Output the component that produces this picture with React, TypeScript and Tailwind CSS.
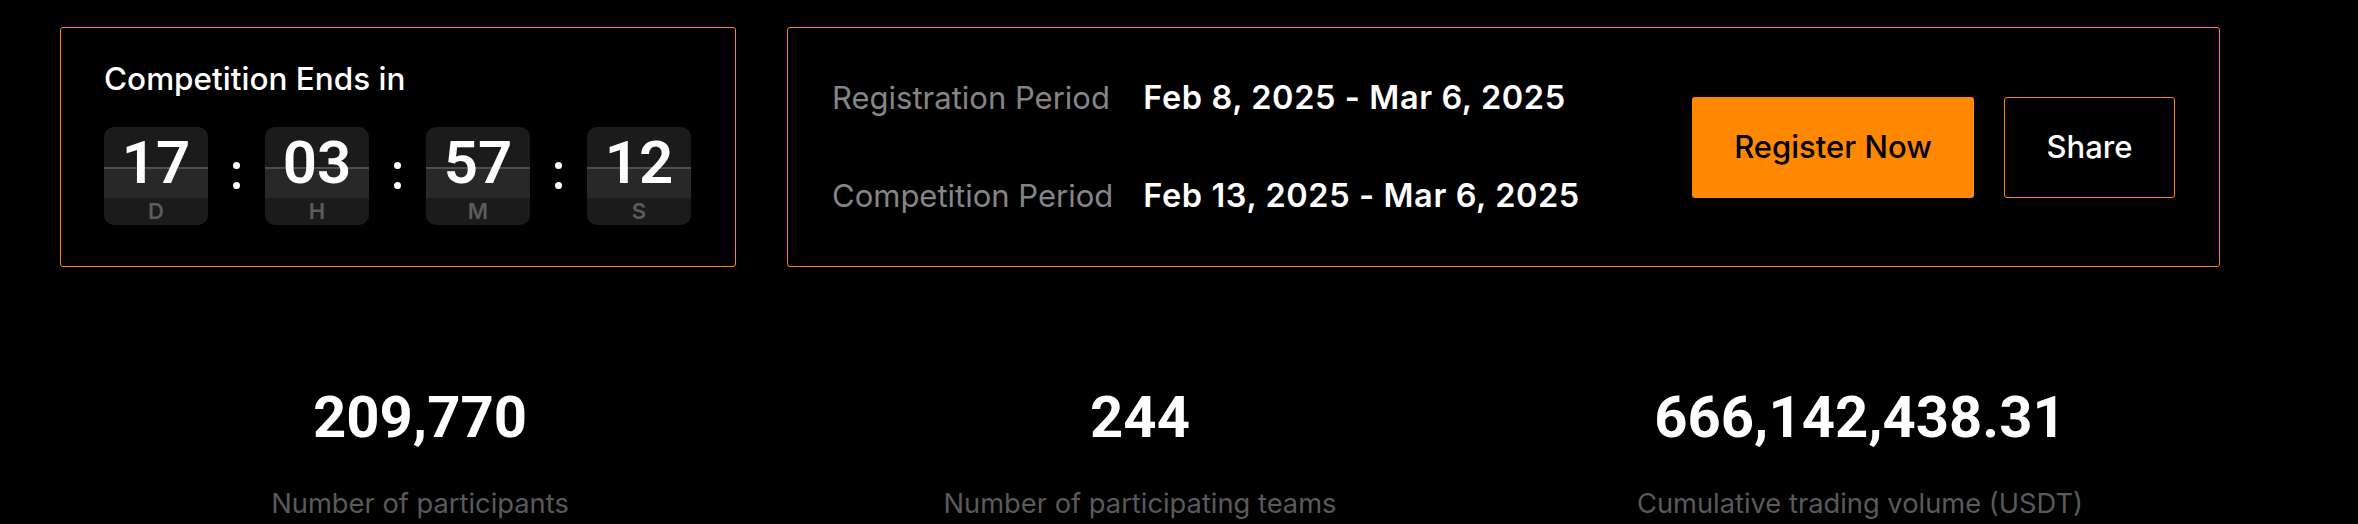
/* Trading competition header: countdown, periods, actions and stats */

const textFont = "font-['Inter','Noto_Sans',sans-serif]"
const numFont = "font-['Roboto','Liberation_Sans',sans-serif]"

const countdown = [
  { value: '17', unit: 'D' },
  { value: '03', unit: 'H' },
  { value: '57', unit: 'M' },
  { value: '12', unit: 'S' },
]

const periods = [
  { label: 'Registration Period', range: 'Feb 8, 2025 - Mar 6, 2025' },
  { label: 'Competition Period', range: 'Feb 13, 2025 - Mar 6, 2025' },
]

const stats = [
  { value: '209,770', label: 'Number of participants' },
  { value: '244', label: 'Number of participating teams' },
  { value: '666,142,438.31', label: 'Cumulative trading volume (USDT)' },
]

function FlipTile({ value, unit }: { value: string; unit: string }) {
  return (
    <div className="w-[104px] h-[98px] rounded-[10px] flex flex-col items-center bg-[linear-gradient(to_bottom,#1b1b1b_0,#1b1b1b_40px,#4f4f4f_40px,#4f4f4f_42px,#282828_42px,#282828_71px,#1b1b1b_71px)]">
      <span className={`${numFont} pt-[6px] text-[60px] leading-none font-semibold text-white`}>{value}</span>
      <span className={`${textFont} mt-[7px] text-[22px] leading-none font-semibold text-[#5c5c5c]`}>{unit}</span>
    </div>
  )
}

function Colon() {
  return (
    <div className="w-[57px] flex flex-col items-center gap-[13px]">
      <span className="w-[7px] h-[7px] rounded-full bg-white" />
      <span className="w-[7px] h-[7px] rounded-full bg-white" />
    </div>
  )
}

export default function App() {
  return (
    <div className={`min-h-screen bg-black ${textFont}`}>
      <div className="w-[2160px] ml-[60px] pt-[27px]">
        {/* 倒计时 + 时间段 */}
        <div className="flex gap-[51px]">
          <div className="w-[676px] h-[240px] border border-[#ff8800] rounded-[3px] px-[43px] pt-[35px]">
            <h2 className="text-[31.5px] leading-none font-medium text-white">Competition Ends in</h2>
            <div className="mt-[32px] flex items-center">
              {countdown.map((c, i) => (
                <div key={c.unit} className="flex items-center">
                  {i > 0 && <Colon />}
                  <FlipTile value={c.value} unit={c.unit} />
                </div>
              ))}
            </div>
          </div>

          <div className="flex-1 h-[240px] border border-[#ff8800] rounded-[3px] px-[44px] flex items-center justify-between">
            <div className="grid grid-cols-[auto_auto] gap-x-[30px] gap-y-[66px] items-baseline">
              {periods.map((p) => (
                <div key={p.label} className="contents">
                  <span className="text-[31px] leading-[32px] text-[#858585]">{p.label}</span>
                  <span className="text-[32.5px] leading-[32px] tracking-[0.6px] font-semibold text-white">{p.range}</span>
                </div>
              ))}
            </div>
            <div className="flex gap-[30px]">
              <button className="w-[282px] h-[101px] rounded-[3px] bg-[#ff8800] text-black text-[31px] font-medium">
                Register Now
              </button>
              <button className="w-[171px] h-[101px] rounded-[3px] border border-[#ff8800] text-white text-[31px] font-medium">
                Share
              </button>
            </div>
          </div>
        </div>

        {/* 统计 */}
        <div className="mt-[121px] grid grid-cols-3 text-center">
          {stats.map((s) => (
            <div key={s.label} className="flex flex-col items-center">
              <span className={`${numFont} text-[58px] leading-none font-bold text-white`}>{s.value}</span>
              <span className="mt-[44px] text-[27.3px] leading-none text-[#5a5a5a]">{s.label}</span>
            </div>
          ))}
        </div>
      </div>
    </div>
  )
}
